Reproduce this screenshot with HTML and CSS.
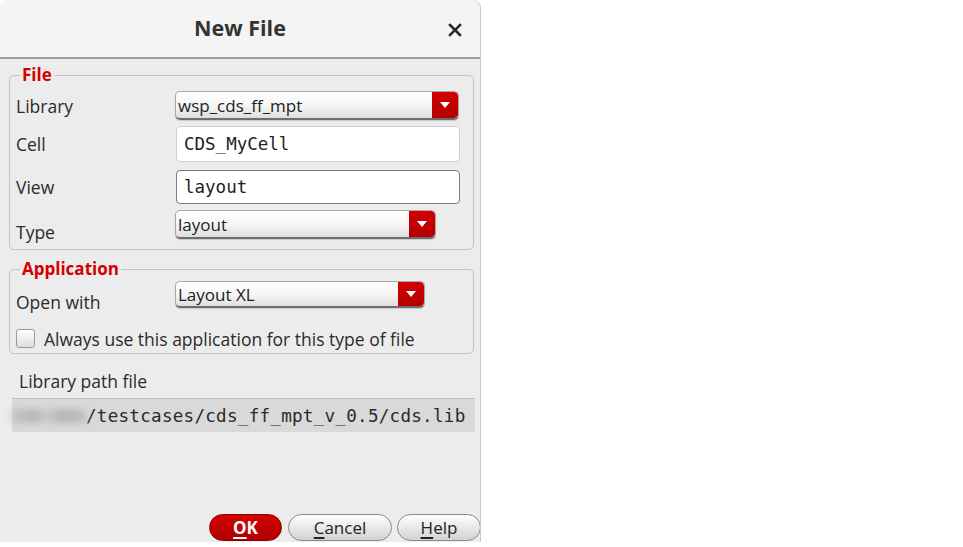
FILE: index.html
```html
<!DOCTYPE html>
<html lang="en">
<head>
<meta charset="utf-8">
<title>New File</title>
<link rel="stylesheet" href="styles.css">
</head>
<body>
<div class="dialog">
  <header class="titlebar">
    <span class="title">New File</span>
    <span class="close" aria-label="Close">
      <svg width="14" height="14" viewBox="0 0 14 14"><path d="M2 2 L12 12 M12 2 L2 12" stroke="#2b2b2b" stroke-width="2.6" stroke-linecap="square"/></svg>
    </span>
  </header>
  <main class="body">
    <fieldset class="group group-file">
      <legend>File</legend>
      <div class="row row-lib">
        <span class="label">Library</span>
        <div class="combo combo-lib"><span class="combo-text">wsp_cds_ff_mpt</span><span class="combo-btn"><span class="tri"></span></span></div>
      </div>
      <div class="row row-cell">
        <span class="label">Cell</span>
        <div class="input input-soft">CDS_MyCell</div>
      </div>
      <div class="row row-view">
        <span class="label">View</span>
        <div class="input input-focus">layout</div>
      </div>
      <div class="row row-type">
        <span class="label label-low">Type</span>
        <div class="combo combo-type"><span class="combo-text">layout</span><span class="combo-btn"><span class="tri"></span></span></div>
      </div>
    </fieldset>
    <fieldset class="group group-app">
      <legend>Application</legend>
      <div class="row row-open">
        <span class="label label-low">Open with</span>
        <div class="combo combo-open"><span class="combo-text">Layout XL</span><span class="combo-btn"><span class="tri"></span></span></div>
      </div>
      <label class="check-row">
        <span class="checkbox"></span>
        <span class="check-text">Always use this application for this type of file</span>
      </label>
    </fieldset>
    <div class="path-label">Library path file</div>
    <div class="path-box"><span class="blurred" aria-hidden="true"></span><span class="path-text">/testcases/cds_ff_mpt_v_0.5/cds.lib</span></div>
  </main>
  <footer class="buttons">
    <button class="btn btn-ok"><u>O</u>K</button>
    <button class="btn btn-cancel"><u>C</u>ancel</button>
    <button class="btn btn-help"><u>H</u>elp</button>
  </footer>
</div>
</body>
</html>
```

FILE: styles.css
```css
* { box-sizing: border-box; }
html, body { margin: 0; padding: 0; background: #ffffff; }
body {
  font-family: "Open Sans", "Noto Sans", "DejaVu Sans", sans-serif;
  font-size: 17.5px;
  color: #2b2b2b;
}

.dialog {
  width: 481px;
  height: 542px;
  background: #ececec;
  border-right: 1px solid #c8c8c8;
  border-radius: 8px 8px 0 0;
  display: flex;
  flex-direction: column;
  overflow: hidden;
}

.titlebar {
  height: 59px;
  flex: none;
  background: #f4f4f4;
  border-bottom: 2px solid #9c9c9c;
  border-radius: 8px 8px 0 0;
  display: flex;
  align-items: center;
  justify-content: center;
  position: relative;
}
.title {
  font-size: 21.5px;
  font-weight: 700;
  color: #333333;
  margin-top: -1px;
  line-height: 28px;
}
.close {
  position: absolute;
  right: 18px;
  top: 23px;
  width: 14px;
  height: 14px;
  display: block;
}
.close svg { display: block; }

.body {
  flex: 1;
  padding: 7px 6px 0 9px;
  display: flex;
  flex-direction: column;
}

.group {
  margin: 0;
  border: 1px solid #c4c4c4;
  border-radius: 5px;
  padding: 7px 0 0 6px;
  min-width: 0;
}
.group legend {
  color: #d40000;
  font-weight: 700;
  font-size: 17px;
  line-height: 18px;
  padding: 0 2px 0 2px;
  margin-left: 4px;
}
.group-file { padding-bottom: 10px; }
.group-app { margin-top: 10px; padding-top: 3px; padding-bottom: 5px; }

.row {
  display: flex;
  align-items: center;
}
.label {
  width: 159px;
  flex: none;
  line-height: 22px;
}
.label-low { align-self: flex-end; }

.row-lib { height: 29px; }
.row-cell { height: 36px; margin-top: 6px; }
.row-view { height: 34px; margin-top: 8px; }
.row-type { height: 29px; margin-top: 6px; }
.row-type .label-low { margin-bottom: -4px; }
.row-open { height: 27px; }
.row-open .label-low { margin-bottom: -5px; }

.combo {
  height: 100%;
  display: flex;
  align-items: stretch;
  border-radius: 5px;
  background: linear-gradient(#ffffff 0%, #f6f6f6 50%, #dedede 100%);
  border: 1px solid #a8a8a8;
  border-bottom: 2px solid #6e6e6e;
  box-shadow: 0 1px 1px rgba(0,0,0,0.15);
  overflow: hidden;
}
.combo-lib { width: 284px; }
.combo-type { width: 261px; }
.combo-open { width: 250px; }
.combo-text {
  flex: 1;
  padding-left: 2px;
  display: flex;
  align-items: center;
  color: #222222;
  font-size: 17px;
}
.combo-btn {
  width: 26px;
  flex: none;
  background: linear-gradient(#d30000, #b30000);
  border-radius: 0 4px 4px 0;
  display: flex;
  align-items: center;
  justify-content: center;
}
.tri {
  width: 0;
  height: 0;
  border-left: 5px solid transparent;
  border-right: 5px solid transparent;
  border-top: 6px solid #ffffff;
}

.input {
  width: 284px;
  height: 100%;
  background: #ffffff;
  border-radius: 4px;
  font-family: "DejaVu Sans Mono", monospace;
  font-size: 17.5px;
  display: flex;
  align-items: center;
  padding-left: 7px;
  color: #222222;
}
.input-soft { border: 1px solid #d0d0d0; margin-left: 1px; }
.input-focus { border: 1.5px solid #7a7a7a; margin-left: 1px; }

.check-row {
  display: flex;
  align-items: center;
  margin-top: 21px;
  height: 19px;
}
.checkbox {
  width: 19px;
  height: 19px;
  border: 1px solid #9a9a9a;
  border-radius: 3px;
  background: linear-gradient(#ffffff, #dcdcdc);
  flex: none;
}
.check-text { margin-left: 9px; }

.path-label {
  margin-top: 17px;
  margin-left: 10px;
  height: 20px;
  line-height: 20px;
}
.path-box {
  margin-top: 7px;
  margin-left: 3px;
  width: 463px;
  height: 34px;
  background: #d9d9d9;
  border-top: 1px solid #bdbdbd;
  display: flex;
  align-items: center;
  font-family: "DejaVu Sans Mono", monospace;
  font-size: 17.6px;
  letter-spacing: 0.25px;
  color: #2a2a2a;
}
.blurred {
  width: 74px;
  height: 14px;
  flex: none;
  background: linear-gradient(90deg, #c4c4c4 0%, #b6b6b6 30%, #c8c8c8 45%, #b4b4b4 70%, #c2c2c2 100%);
  filter: blur(3px);
}
.path-text { margin-left: 0; white-space: nowrap; }

.buttons {
  flex: none;
  display: flex;
  justify-content: flex-end;
  align-items: flex-end;
  height: 28px;
  padding-bottom: 1px;
  gap: 5px;
}
.btn {
  height: 27px;
  border-radius: 14px;
  font-family: "Open Sans", "Noto Sans", sans-serif;
  font-size: 17px;
  padding: 0;
  cursor: default;
  display: flex;
  align-items: center;
  justify-content: center;
}
.btn u { text-underline-offset: 3px; text-decoration-thickness: 1.5px; }
.btn-ok {
  width: 73px;
  background: linear-gradient(#d40000, #b00000);
  border: 1px solid #8c0000;
  color: #ffffff;
  font-weight: 700;
}
.btn-cancel {
  width: 104px;
  margin-left: 1px;
  background: linear-gradient(#ffffff, #e4e4e4 60%, #d2d2d2);
  border: 1px solid #8a8a8a;
  color: #222222;
}
.btn-help {
  width: 84px;
  margin-right: -1px;
  background: linear-gradient(#ffffff, #e4e4e4 60%, #d2d2d2);
  border: 1px solid #8a8a8a;
  color: #222222;
}
```
